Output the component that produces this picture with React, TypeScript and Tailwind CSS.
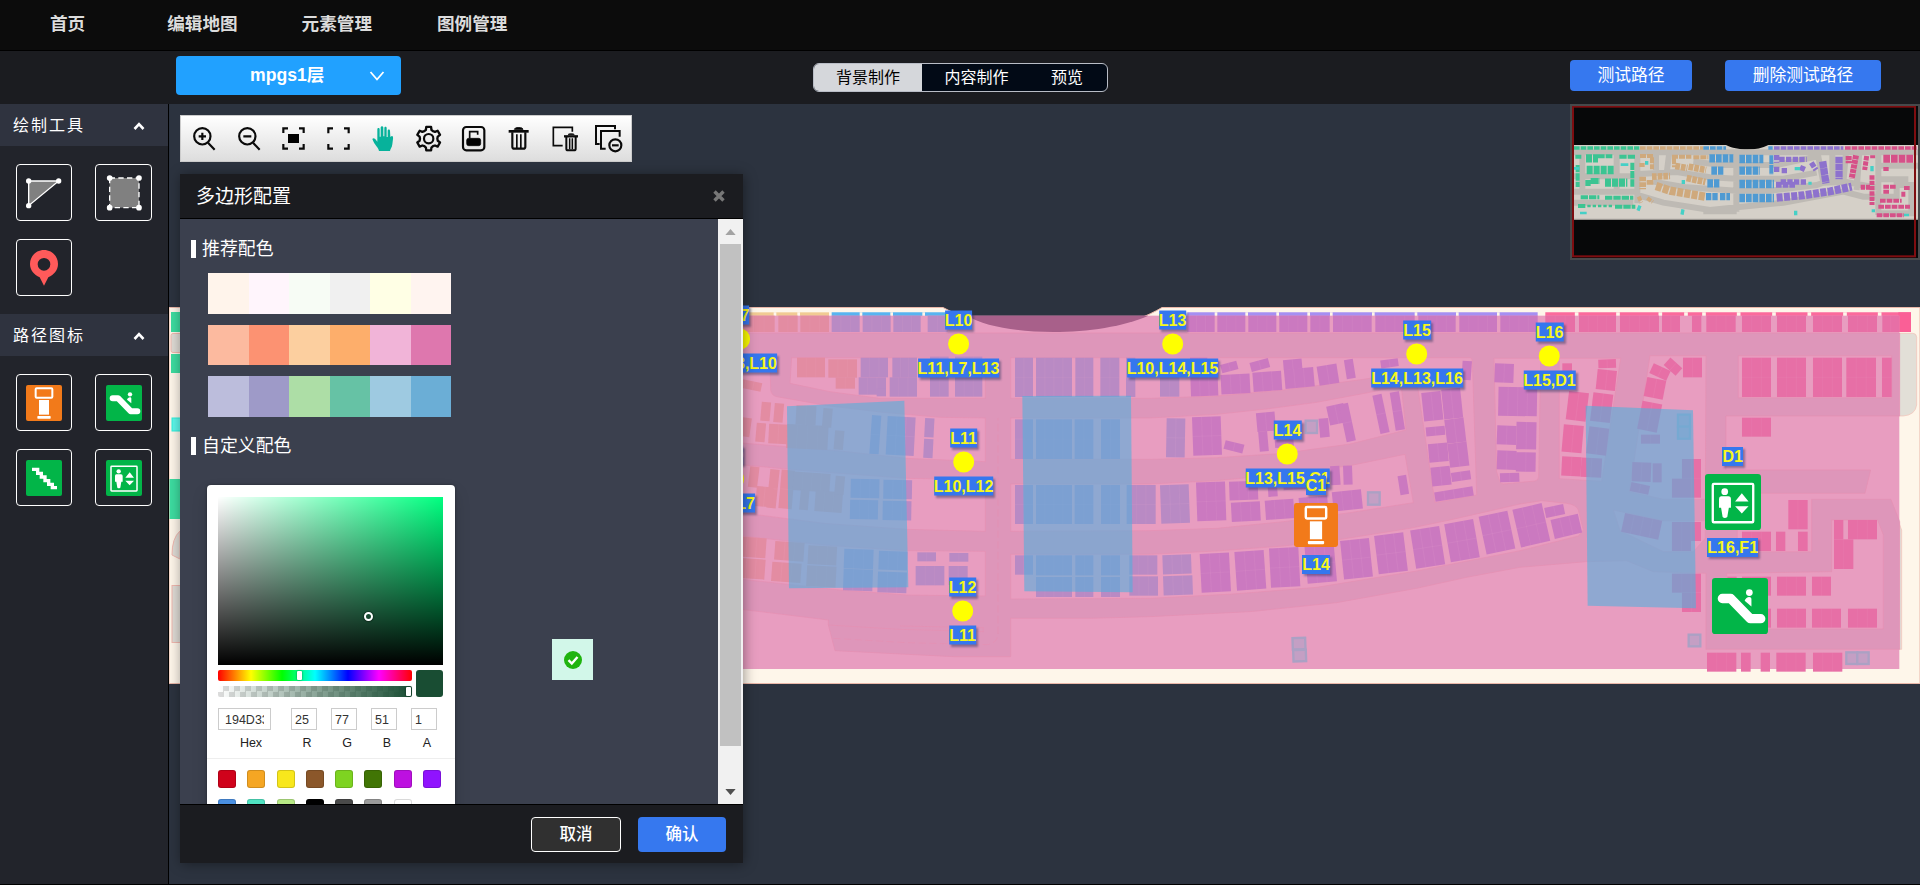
import React from "react";

/* ---------- shared pictograms ---------- */

function KioskIcon({ className }: { className?: string }) {
  return (
    <svg viewBox="0 0 108 108" className={className}>
      <rect width="108" height="108" rx="6" fill="#f27a1a" />
      <rect x="29" y="10" width="50" height="28" rx="3" fill="none" stroke="#fff" strokeWidth="6" />
      <rect x="39" y="45" width="30" height="44" fill="#fff" />
      <rect x="34" y="93" width="40" height="8" rx="2" fill="#fff" />
    </svg>
  );
}

function EscalatorIcon({ className }: { className?: string }) {
  return (
    <svg viewBox="0 0 108 108" className={className}>
      <rect width="108" height="108" rx="6" fill="#02b548" />
      <path d="M20 39.500H36L74 78.500H94" fill="none" stroke="#fff" strokeWidth="18" strokeLinecap="round" strokeLinejoin="round" />
      <circle cx="72" cy="28" r="6.500" fill="#fff" />
      <path d="M63 44C65 36 76 34 76 41V55Z" fill="#fff" />
    </svg>
  );
}

function StairsIcon({ className }: { className?: string }) {
  return (
    <svg viewBox="0 0 108 108" className={className}>
      <rect width="108" height="108" rx="6" fill="#02b548" />
      <path d="M18 28H35V40H46V51H57V62H68V73H79V83H93" fill="none" stroke="#fff" strokeWidth="10" />
    </svg>
  );
}

function ElevatorIcon({ className }: { className?: string }) {
  return (
    <svg viewBox="0 0 108 108" className={className}>
      <rect width="108" height="108" rx="6" fill="#02b548" />
      <rect x="15" y="19" width="78" height="74" rx="2" fill="none" stroke="#fff" strokeWidth="4.500" />
      <circle cx="38" cy="34" r="6.500" fill="#fff" />
      <path d="M31 43H45Q50 43 50 48V65H46L43 83Q38 87 34 83L31 65H27V48Q27 43 31 43Z" fill="#fff" />
      <path d="M71 37L84 53H58ZM58 62H84L71 76Z" fill="#fff" />
    </svg>
  );
}

function TriangleTool() {
  return (
    <svg viewBox="0 0 108 108" className="size-9">
      <path d="M8 18H98L8 92Z" fill="#808080" stroke="#fff" strokeWidth="4" />
      <g fill="#fff">
        <circle cx="8" cy="18" r="8" />
        <circle cx="98" cy="18" r="8" />
        <circle cx="8" cy="92" r="8" />
      </g>
    </svg>
  );
}

function RectTool() {
  return (
    <svg viewBox="0 0 108 108" className="size-9">
      <rect x="11" y="9" width="88" height="89" fill="#808080" />
      <rect x="11" y="9" width="88" height="89" fill="none" stroke="#fff" strokeWidth="4" strokeDasharray="16 10" />
      <g fill="#fff">
        <circle cx="11" cy="9" r="8.500" />
        <circle cx="99" cy="9" r="8.500" />
        <circle cx="11" cy="98" r="8.500" />
        <circle cx="99" cy="98" r="8.500" />
      </g>
    </svg>
  );
}

function PinTool() {
  return (
    <svg viewBox="0 0 108 108" className="size-9">
      <path
        fillRule="evenodd"
        fill="#ff5a5a"
        d="M54 0C31 0 12 18 12 42C12 60 24 74 41 82L54 107L67 82C84 74 96 60 96 42C96 18 77 0 54 0ZM54 24A19 19 0 1 1 54 62A19 19 0 1 1 54 24Z"
      />
    </svg>
  );
}

/* ---------- toolbar ---------- */

const gearPoints = (() => {
  const pts: string[] = [];
  for (let i = 0; i < 6; i++) {
    const base = (i * Math.PI) / 3 - Math.PI / 2;
    const steps: [number, number][] = [
      [-0.3, 28],
      [-0.2, 36],
      [0.2, 36],
      [0.3, 28],
      [0.52, 26],
    ];
    for (const [a, r] of steps) {
      pts.push(`${(41 + r * Math.cos(base + a)).toFixed(1)},${(41 + r * Math.sin(base + a)).toFixed(1)}`);
    }
  }
  return pts.join(" ");
})();

const toolbarIcons: React.ReactNode[] = [
  <g>
    <circle cx="37" cy="34" r="24.500" />
    <path d="M54 53L74 74M26 34H48M37 23V45" />
  </g>,
  <g>
    <circle cx="37" cy="34" r="24.500" />
    <path d="M54 53L74 74M25 34H49" />
  </g>,
  <g>
    <path d="M10 24V10H24M57 10H71V24M71 57V71H57M24 71H10V57" />
    <rect x="24" y="27" width="33" height="27" fill="#000" stroke="none" />
  </g>,
  <path d="M10 25V10H24M57 10H71V25M71 57V71H57M24 71H10V57" />,
  <path
    stroke="none"
    fill="#07b29b"
    d="M7 42C10 37 15 40 18 45L22 50V13C22 8 29 8 29 13V35H32V8C32 2 40 2 40 8V34H43V9C43 4 50 4 50 9V36H53V17C53 12 60 12 60 17L61 36C69 28 70 38 69 42L67 58C66 68 61 72 60 78H27C26 68 13 60 7 42Z"
  />,
  <g>
    <polygon points={gearPoints} strokeLinejoin="round" strokeWidth="7" />
    <circle cx="41" cy="41" r="14" />
  </g>,
  <g>
    <rect x="9" y="6" width="64" height="70" rx="10" />
    <rect x="20" y="40" width="42" height="22" rx="6" fill="#000" stroke="#000" strokeWidth="2" />
    <path d="M29 40V20H53V29" strokeWidth="5" />
  </g>,
  <g>
    <path d="M11 19H71" strokeWidth="8" />
    <path d="M28 13Q30 8 36 8H46Q52 8 54 13Z" fill="#000" strokeWidth="3" />
    <path d="M22 22V65Q22 71 28 71H55Q61 71 61 65V22" strokeWidth="6.500" />
    <path d="M35.500 28V70M47.500 28V70" strokeWidth="5" />
  </g>,
  <g>
    <path d="M38 62H10V7H67V20" strokeWidth="5" />
    <path d="M42 34H84" strokeWidth="7" />
    <path d="M54 29Q56 26 60 26H67Q71 26 73 29Z" fill="#000" strokeWidth="2" />
    <path d="M49 36V71Q49 76 54 76H72Q77 76 77 71V36" strokeWidth="6" />
    <path d="M59 40V73M67 40V73" strokeWidth="4.500" />
  </g>,
  <g>
    <path d="M14 57H3V3H60V13" strokeWidth="6" />
    <path d="M32 71H18V18H74V35" strokeWidth="6" />
    <circle cx="61" cy="61" r="18" />
    <path d="M51 61H71" />
  </g>,
];

function Toolbar() {
  return (
    <div className="absolute left-[11px] top-[11px] flex h-[47px] w-[452px] items-center border border-[#ccc] bg-linear-to-b from-white to-[#dddddd]">
      {toolbarIcons.map((icon, i) => (
        <span key={i} className="flex w-[45px] justify-center">
          <svg viewBox="0 0 81 81" className="size-[27px] overflow-visible" fill="none" stroke="#0a0a0a" strokeWidth="6.500">
            {icon}
          </svg>
        </span>
      ))}
    </div>
  );
}

/* ---------- map ---------- */

type Block = [number, number, number, number, number?];

function Blocks({ items, fill }: { items: Block[]; fill: string }) {
  return (
    <>
      {items.map(([x, y, w, h, r = 0], i) => {
        const n = Math.max(1, Math.round(w / 29));
        const lines: React.ReactNode[] = [];
        for (let k = 1; k < n; k++) {
          lines.push(<path key={k} d={`M${x + (w * k) / n} ${y}v${h}`} />);
        }
        if (h > 90) lines.push(<path key="h" d={`M${x} ${y + h / 2}h${w}`} />);
        return (
          <g key={i} transform={r ? `rotate(${r} ${x + w / 2} ${y + h / 2})` : undefined}>
            <rect x={x} y={y} width={w} height={h} fill={fill} />
            <g stroke="#f4b4d2" strokeOpacity=".14" strokeWidth="2">
              {lines}
            </g>
          </g>
        );
      })}
    </>
  );
}

const PINK = "#e89dc0";
const RED = "#e76fa6";
const MAGENTA = "#cb79c0";
const VIOLET = "#b98ac4";
const SALMON = "#e38ca2";

const westIslands = [
  "M155 203H736V325H420L270 305L150 280Z",
  "M-20 203H90L92 300Q94 316 110 320L270 348L430 367L600 382L736 384V515L500 505L300 483L-20 457Z",
  "M-20 522L170 540L500 565L736 570V724L500 718L250 700L-20 665Z",
  "M-20 735L250 765L500 782L736 784V918L500 915L300 900L-20 865Z",
  "M812 203H2190Q2197 203 2197 215L2210 615L2085 638L2033 290L2010 245L1870 268L1760 283L1630 300L1430 318L1230 325H812Z",
  "M812 384H1230L1430 373L1580 357L1730 337L1890 307L1970 290L1985 300L1998 420L1830 462L1630 490L1430 503L1230 508H812Z",
  "M812 582H1230L1430 572L1660 550L1830 527L1995 493L2020 638L1830 668L1630 695L1430 715L1230 722L812 724Z",
  "M812 793H1230L1430 783L1630 768L1790 750L2010 715L2130 690L2240 665L2340 642L2405 632L2480 640Q2510 645 2515 660L2530 720L2515 738L2340 782L2030 843L1730 892L1480 912L1230 925L812 927Z",
  "M2262 205H2402L2396 560Q2394 572 2385 573L2290 582Q2280 582 2278 570L2270 545Z",
];

const eastIslands = [
  "M118 205H302L245 574L118 566Z",
  "M390 197H558L556 628H430L328 605Z",
  "M280 660L430 692H556V745L520 785H430L300 722Z",
  "M655 197H1115V323H655Z",
  "M935 690H1073L1090 735V1017H620V850L935 845Z",
];

function MapDrawing() {
  return (
    <svg viewBox="169 104 1751 780" className="absolute inset-0 h-full w-full" preserveAspectRatio="none">
      <path d="M169 307.500H943C1000 338 1105 342 1162 307.500H1920V683.500H169Z" fill="#fef6ea" stroke="#eab7a8" strokeWidth="1" />
      <g>
        <rect x="171" y="312" width="20" height="20" fill="#3ddca0" />
        <rect x="171" y="333.500" width="20" height="19" rx="2" fill="#dfdbd5" stroke="#f0b7ae" />
        <rect x="171" y="354" width="20" height="19" fill="#3ddca0" />
        <rect x="172" y="418" width="20" height="13" fill="#5df7ea" stroke="#2fefdc" />
        <rect x="169.500" y="479" width="20" height="40" fill="#3ddca0" />
        <path d="M180 531Q172 538 172 555L180 559Z" fill="#dfdbd5" stroke="#f0b7ae" />
        <rect x="172" y="585.500" width="20" height="57" fill="#dfdbd5" stroke="#f0b7ae" />
      </g>

      <g transform="translate(740 290) scale(.33333)">
        <path d="M3400 130H3518Q3530 130 3530 142V345Q3526 375 3490 378H3400Z" fill="#e2dfd7" stroke="#f3bfb5" strokeWidth="2" />
        <path d="M3470 680L3485 720V1078H3470Z" fill="#e2dfd7" stroke="#f3bfb5" strokeWidth="2" />
        <g>
          <rect x="9" y="67" width="258" height="12" fill="#f1cb93" />
          <path d="M275 67H620V79H275Z" fill="#58b4f0" />
          <path d="M1342 67H2393V79H1342Z" fill="#a68ff2" />
          <path d="M2416 67H3513V79H2416Z" fill="#fb6a9c" />
          <rect x="3475" y="67" width="38" height="59" fill="#fa5f96" />
          <path
            d="M105 67v12M176 67v12M363 67v12M455 67v12M551 67v12M1428 67v12M1520 67v12M1613 67v12M1706 67v12M1774 67v12M1900 67v12M2028 67v12M2152 67v12M2275 67v12"
            stroke="#fef6ea"
            strokeWidth="8"
          />
          <path
            d="M2510 67v12M2634 67v12M2761 67v12M2838 67v12M2892 67v12M2996 67v12M3102 67v12M3208 67v12M3315 67v12M3419 67v12"
            stroke="#fef6ea"
            strokeWidth="11"
          />
        </g>
        <rect x="-20" y="77" width="3498" height="1060" fill={PINK} />
        <path d="M680 77C790 142 1080 142 1225 77Z" fill="#a8608a" />
        <path
          d="M-20 129H3479V378H2958V540H3392L3375 610H2992V785H3215V628H3453L3479 695V1078H2898V850L2740 845L2660 812L2540 815L2340 832L2180 862L2030 895L1790 938L1530 965L1230 980L1050 985H812V1100H640L285 1082L265 1005V990L-20 955Z"
          fill="#de96ba"
          stroke="#e690b2"
          strokeWidth="2"
        />
        <g fill={PINK} stroke="#e690b2" strokeWidth="2">
          {westIslands.map((d) => (
            <path key={d} d={d} />
          ))}
          <path d="M265 1005L480 1018L730 1025V1013L480 1008" fill="none" />
          <path d="M280 1045L500 1058L740 1064Q774 1060 774 1030V384" fill="none" strokeDasharray="22 10" />
        </g>

        <Blocks
          fill={SALMON}
          items={[
            [9, 77, 95, 49], [115, 77, 58, 49], [181, 77, 86, 49],
            [171, 203, 84, 59], [265, 208, 86, 55], [287, 262, 58, 34],
            [-10, 272, 75, 26, 12], [63, 336, 28, 57, 5], [102, 340, 28, 57, 5], [-10, 382, 42, 57, 8], [48, 399, 28, 57, 5],
            [86, 403, 58, 58, 3], [140, 405, 124, 72, 3], [168, 347, 60, 58, 3], [248, 355, 28, 57, 5], [283, 422, 28, 57, 5],
            [27, 530, 28, 62, 7], [85, 538, 28, 116, 6], [48, 590, 50, 60, 5], [120, 540, 40, 116, 5], [160, 548, 110, 56, 4], [180, 600, 26, 60, 5], [225, 604, 82, 62, 4], [285, 558, 28, 56, 5],
            [-10, 742, 88, 60, 4], [-10, 806, 85, 60, 4], [104, 756, 88, 56, 4], [95, 818, 88, 58, 4], [204, 768, 86, 56, 3], [200, 828, 88, 62, 3],
          ]}
        />
        <Blocks
          fill={VIOLET}
          items={[
            [275, 77, 84, 49], [368, 77, 84, 49], [460, 77, 82, 49], [563, 77, 60, 49],
            [362, 203, 82, 59], [457, 203, 74, 60], [356, 262, 82, 52], [410, 296, 28, 23], [449, 262, 82, 58], [570, 200, 56, 120], [645, 200, 82, 120],
            [392, 376, 28, 116, 4], [440, 380, 84, 116, 3], [554, 385, 28, 57, 3], [551, 447, 28, 57, 3],
            [332, 567, 86, 57, 1], [430, 570, 86, 57, 1], [330, 630, 84, 58, 1], [428, 633, 86, 58, 1],
            [312, 778, 88, 58, 2], [416, 784, 86, 56, 2], [310, 838, 88, 64, 2], [413, 846, 87, 62, 2],
            [532, 787, 56, 27], [628, 789, 57, 26], [527, 828, 86, 58], [626, 828, 57, 57],
            [825, 203, 54, 118], [888, 203, 108, 118], [1006, 203, 54, 118], [1081, 203, 57, 118], [1158, 203, 28, 118],
            [825, 388, 54, 119], [888, 388, 108, 119], [1004, 388, 56, 119], [1083, 388, 57, 119],
            [825, 585, 54, 117], [888, 585, 108, 117], [1004, 585, 56, 117], [1083, 585, 57, 117], [1160, 585, 87, 117],
            [825, 796, 54, 58], [888, 796, 108, 60], [1006, 796, 54, 60], [1083, 796, 57, 60], [1168, 796, 84, 58],
            [888, 861, 108, 60], [1006, 861, 54, 60], [1083, 861, 57, 60], [1168, 859, 86, 58],
            [1260, 260, 58, 60], [1279, 385, 56, 117, 1], [1262, 584, 86, 116, -2], [1268, 794, 86, 58, -2], [1270, 857, 88, 58, -2],
          ]}
        />
        <Blocks
          fill={MAGENTA}
          items={[
            [1342, 77, 82, 49], [1432, 77, 84, 49], [1525, 77, 84, 49], [1618, 77, 84, 49], [1711, 77, 58, 49], [1779, 77, 116, 49],
            [1906, 77, 118, 49], [2035, 77, 112, 49], [2158, 77, 113, 49], [2281, 77, 112, 49],
            [1350, 203, 52, 50], [1352, 258, 82, 60, -2], [1443, 218, 50, 26, -15], [1443, 253, 87, 58, -3], [1531, 211, 57, 28, -15], [1539, 245, 86, 58, -4],
            [1630, 208, 56, 30, -5], [1634, 235, 88, 58, -5], [1734, 225, 60, 58, -9], [1816, 208, 27, 58, -9], [1922, 208, 53, 24, -8], [2166, 213, 28, 57, 4],
            [1358, 380, 86, 116, -2], [1453, 457, 58, 27, 14], [1550, 367, 56, 57, -5], [1557, 424, 27, 60, -5], [1605, 448, 56, 24, -4], [1738, 385, 29, 57, -5],
            [1764, 344, 52, 58, -12], [1808, 340, 28, 115, -12], [1909, 313, 28, 117, -12], [1958, 305, 28, 116, -9],
            [1370, 576, 87, 116, -2], [1468, 574, 86, 56, -2], [1474, 636, 87, 58, -3], [1584, 580, 28, 40, -4], [1576, 629, 86, 58, -4], [1678, 620, 86, 58, -5], [1778, 602, 88, 58, -6], [1630, 570, 90, 28, -4],
            [1772, 528, 28, 57, -4], [1810, 527, 27, 57, -2], [1977, 556, 26, 58, -9],
            [2048, 306, 58, 86, -6], [2108, 296, 57, 90, -6], [2058, 410, 57, 27, -5], [2117, 386, 58, 72, -7], [2066, 460, 58, 56, -5], [2126, 458, 58, 72, -7], [2074, 530, 58, 57, -6], [2134, 545, 58, 27, -8], [2084, 598, 116, 28, -9],
            [2264, 221, 57, 57, 2], [2275, 291, 116, 87, 1], [2271, 407, 58, 57, 2], [2329, 396, 60, 82, 1], [2271, 482, 58, 57, 2], [2328, 487, 59, 58, 1], [2280, 549, 58, 27, -2],
            [1382, 790, 88, 116, -3], [1487, 783, 88, 116, -4], [1590, 773, 88, 118, -3], [1698, 762, 88, 116, -5], [1806, 748, 87, 116, -6], [1909, 732, 88, 116, -7], [2019, 714, 88, 116, -9], [2122, 694, 88, 116, -10], [2227, 670, 88, 116, -12], [2329, 648, 90, 116, -13],
            [2415, 648, 58, 30, -12], [2437, 680, 84, 58, -13],
          ]}
        />
        <g fill="#c49fc4" stroke="#aba1c4" strokeWidth="7">
          <rect x="1697" y="392" width="34" height="37" />
          <rect x="1884" y="607" width="35" height="37" />
          <rect x="1658" y="1044" width="38" height="34" transform="rotate(-2 1677 1061)" />
          <rect x="1660" y="1080" width="38" height="34" transform="rotate(-2 1679 1097)" />
        </g>

        <g transform="translate(2340 0)">
          <g fill={PINK} stroke="#e690b2" strokeWidth="2">
            {eastIslands.map((d) => (
              <path key={d} d={d} />
            ))}
          </g>
          <Blocks
            fill={RED}
            items={[
              [76, 77, 89, 49], [177, 77, 111, 49], [300, 77, 117, 49], [426, 77, 54, 49], [516, 77, 28, 49], [559, 77, 88, 49], [666, 77, 87, 49], [771, 77, 87, 49], [879, 77, 87, 49], [984, 77, 87, 49], [1087, 77, 51, 49],
              [127, 220, 29, 56], [235, 208, 53, 26, -2], [230, 240, 58, 60, 6], [142, 306, 60, 86, 7], [215, 310, 60, 86, 7], [128, 405, 60, 82, 5], [203, 412, 60, 82, 7], [125, 500, 58, 58, 3], [183, 504, 62, 58, 3],
              [392, 230, 56, 32, 25], [376, 266, 58, 58, 11], [359, 337, 60, 86, 11], [435, 215, 48, 30, 42], [489, 203, 57, 59], [363, 434, 57, 27],
              [336, 517, 57, 58, 2], [398, 520, 27, 57], [331, 582, 57, 27, 12], [308, 680, 114, 58, 12],
              [486, 507, 57, 116], [456, 566, 30, 57], [456, 696, 87, 57], [456, 753, 57, 30], [456, 851, 87, 57], [486, 908, 57, 58],
              [666, 203, 87, 118], [771, 203, 87, 118], [879, 203, 87, 118], [979, 203, 89, 118], [1086, 203, 29, 118],
              [666, 383, 87, 57], [805, 630, 58, 88], [666, 725, 87, 58], [768, 725, 28, 58], [834, 725, 29, 58],
              [942, 690, 28, 58], [984, 690, 87, 58], [942, 748, 58, 89],
              [622, 860, 28, 57], [666, 860, 87, 57], [771, 860, 87, 57], [876, 860, 57, 57],
              [666, 956, 87, 57], [771, 956, 87, 57], [876, 956, 87, 57], [984, 956, 87, 57],
              [561, 1088, 88, 57], [663, 1088, 29, 57], [722, 1088, 28, 57], [769, 1088, 88, 57], [879, 1088, 88, 57],
            ]}
          />
          <g fill="#c49fc4" stroke="#aba1c4" strokeWidth="7">
            <rect x="474" y="374" width="36" height="36" />
            <rect x="474" y="410" width="36" height="36" />
            <rect x="506" y="1034" width="35" height="35" />
            <rect x="979" y="1087" width="33" height="35" />
            <rect x="1012" y="1087" width="34" height="35" />
          </g>
          <path d="M197 347L519 361L528 955L203 947Z" fill="#53afdc" fillOpacity=".6" />
        </g>
        <path d="M141 349L493 332L505 892L147 895Z" fill="#53afdc" fillOpacity=".6" />
        <path d="M847 318L1173 317L1178 907L853 904Z" fill="#53afdc" fillOpacity=".6" />
      </g>
    </svg>
  );
}

interface MapNode {
  x: number;
  y: number;
  name: string;
  links: string;
}

const nodes: MapNode[] = [
  { x: 740, y: 338.5, name: "L7", links: "L6,L8,L10" },
  { x: 734, y: 479, name: "L9", links: "L8,L7" },
  { x: 958.5, y: 343.5, name: "L10", links: "L11,L7,L13" },
  { x: 963.5, y: 461.5, name: "L11", links: "L10,L12" },
  { x: 962.5, y: 610.5, name: "L12", links: "L11" },
  { x: 1172.5, y: 343.5, name: "L13", links: "L10,L14,L15" },
  { x: 1287.5, y: 453.5, name: "L14", links: "L13,L15,C1" },
  { x: 1417, y: 353.5, name: "L15", links: "L14,L13,L16" },
  { x: 1549.5, y: 355.5, name: "L16", links: "L15,D1" },
];

function Tag({ children }: { children: React.ReactNode }) {
  return (
    <span className="block h-[19px] bg-[#3577ee] font-['Liberation_Sans',sans-serif] text-[16px] leading-[19px] font-bold whitespace-nowrap text-[#f7f71a] shadow-[2px_2px_2px_rgba(40,50,90,0.45)]">
      {children}
    </span>
  );
}

function Marker({ x, y, children }: { x: number; y: number; children: React.ReactNode }) {
  return (
    <div
      className="absolute flex -translate-x-1/2 -translate-y-1/2 flex-col items-center"
      style={{ left: x - 169, top: y - 104 }}
    >
      {children}
    </div>
  );
}

function MapMarkers() {
  return (
    <>
      {nodes.map((n) => (
        <Marker key={n.name} x={n.x} y={n.y}>
          <Tag>{n.name}</Tag>
          <span className="my-1 size-[21px] rounded-full bg-[#ffff00]" />
          <Tag>{n.links}</Tag>
        </Marker>
      ))}
      <Marker x={1316} y={524.7}>
        <Tag>C1</Tag>
        <KioskIcon className="my-2 size-11" />
        <Tag>L14</Tag>
      </Marker>
      <Marker x={1732.7} y={502}>
        <Tag>D1</Tag>
        <ElevatorIcon className="my-2 size-14" />
        <Tag>L16,F1</Tag>
      </Marker>
      <Marker x={1739.5} y={605.7}>
        <EscalatorIcon className="size-14" />
      </Marker>
    </>
  );
}

/* ---------- minimap ---------- */

function MiniMap() {
  const bar = (d: string, color: string, width: number, dash: string) => (
    <path d={d} fill="none" stroke={color} strokeWidth={width} strokeDasharray={dash} />
  );
  const G = "#3cc492";
  const T = "#cfa97c";
  const B = "#4f9ad2";
  const P = "#8d72cd";
  const R = "#d65088";
  const C = "#45d0c6";
  return (
    <div className="absolute top-0 right-0 h-[156px] w-[350px] border-2 border-r-0 border-[#47494b] bg-[#070809]">
      <svg viewBox="66 168 1044 456" className="h-full w-full" preserveAspectRatio="none">
        <path d="M72 285H528C560 302 620 304 655 285H1104V510H72Z" fill="#d5d0c8" />
        <path d="M72 508H1104" stroke="#8e8b86" strokeWidth="3" />
        <g fill="none" stroke="#bebab4" strokeWidth="18">
          <path d="M72 307H1104M97 306V430M200 306V430M72 379H265M72 425H265M72 458H250M262 306V460M318 306V360M358 306L350 370M265 372L380 366L480 382L560 386H700L800 368M262 435L340 458L480 480L560 472L700 458L880 425L940 440H990M310 395L410 412L560 422H660L800 405L820 398M430 335L520 345H680L800 320M559 306V485M460 484H560M804 315L820 398M847 306V395M888 306L880 400M928 306L920 420M985 306V495M985 347H1104M985 388H1075M990 440H1040V405H1084V490H990M820 398L890 396L985 414" />
        </g>
        {bar("M72 294H268", G, 11, "17 3")}
        {bar("M270 294H460", T, 11, "17 3")}
        {bar("M460 294H528M655 294H668", B, 11, "17 3")}
        {bar("M672 294H880", P, 11, "17 3")}
        {bar("M885 294H1100", R, 11, "17 3")}
        {bar("M108 325H144M110 360H192M165 398H232", G, 25, "18 3")}
        {bar("M144 319H190", G, 12, "20 3")}
        {bar("M106 399H122M122 393H150", G, 18, "24 3")}
        {bar("M76 320H94M83 345V411M247 338V410", G, 12, "22 3")}
        {bar("M208 320H256M92 442H148M165 443H250M84 468H106M195 470H256", G, 12, "22 3")}
        {bar("M112 468H188", G, 8, "10 6")}
        {bar("M270 318H310M306 322V358M268 345H284M366 320H424M430 322H475M372 325V352", T, 12, "18 3")}
        {bar("M376 348L412 354M416 350L468 360M278 380V418M306 380L360 378M300 404V390M410 384L466 396", T, 20, "14 3")}
        {bar("M318 408L360 422L465 440", T, 25, "18 4")}
        {bar("M266 440L274 458M292 444L308 456", T, 12, "14 4")}
        {bar("M478 325H550M568 327H640M484 362H520M472 400H508M568 362H630M568 402H672M568 444H672", B, 25, "17 3")}
        {bar("M468 440H505M510 440H540", B, 22, "16 3")}
        {bar("M664 316V375", B, 12, "26 3")}
        {bar("M680 315V338M688 328H770M680 350V370M695 362H712M750 352L768 360M784 338L798 360M692 396H770", P, 16, "16 4")}
        {bar("M678 404H735", P, 18, "17 3")}
        {bar("M680 443L760 436L840 424L905 410", P, 24, "18 4")}
        {bar("M818 334L828 400M867 320V388", P, 22, "20 1")}
        {bar("M896 318V340M918 316L905 386", R, 18, "12 2")}
        {bar("M950 318L944 360M968 325V316M966 376V465M932 412H960", R, 15, "13 3")}
        {bar("M1000 326H1090", R, 24, "20 3")}
        {bar("M1000 357H1016M1000 410H1038M1000 425H1020M990 452H1055M985 470H1080M980 496H1062M1062 414H1080M1060 425V440", R, 12, "17 3")}
        {bar("M290 333V344M270 467L264 482M399 478L396 494M737 482V496M966 348V364M734 356H750M970 478V487M400 390V402M780 395V404", C, 10, "none")}
        {bar("M90 489H110M72 355H88M212 344H235M1062 495H1077", C, 8, "none")}
        <rect x="69" y="170" width="1026" height="449" fill="none" stroke="#7e0d10" strokeWidth="6" />
        <path d="M1107 168V624" stroke="#47494b" strokeWidth="6" />
      </svg>
    </div>
  );
}

/* ---------- polygon dialog ---------- */

function SectionTitle({ children }: { children: string }) {
  return (
    <div className="flex h-[18px] items-center gap-[6px]">
      <span className="h-full w-[5px] bg-white" />
      <span className="relative top-px text-[17.900px] leading-none text-white">{children}</span>
    </div>
  );
}

const palette = [
  ["bg-[#fff4eb]", "bg-[#fff5fc]", "bg-[#f7fcf5]", "bg-[#f0f0f0]", "bg-[#ffffe5]", "bg-[#fff4f0]"],
  ["bg-[#fcba9f]", "bg-[#fc9272]", "bg-[#fccf9f]", "bg-[#fdae6b]", "bg-[#f1b4d8]", "bg-[#de77ae]"],
  ["bg-[#bcbddc]", "bg-[#9e9ac8]", "bg-[#addea6]", "bg-[#66c2a5]", "bg-[#9ecae1]", "bg-[#6baed6]"],
];

const presets = [
  "bg-[#d0021b]", "bg-[#f5a623]", "bg-[#f8e71c]", "bg-[#8b572a]", "bg-[#7ed321]", "bg-[#417505]", "bg-[#bd10e0]", "bg-[#9013fe]",
  "bg-[#4a90e2]", "bg-[#50e3c2]", "bg-[#b8e986]", "bg-[#000000]", "bg-[#4a4a4a]", "bg-[#9b9b9b]", "bg-[#ffffff]",
];

function Field({ label, value, wide }: { label: string; value: string; wide?: boolean }) {
  return (
    <div className={wide ? "w-[53px]" : "w-[26px]"}>
      <div
        className={
          "flex h-[22px] items-center overflow-hidden border border-[#ccc] text-[12.500px] whitespace-nowrap text-[#333] " +
          (wide ? "px-[6px]" : "pl-[3px]")
        }
      >
        <span className="relative top-px overflow-hidden">{value}</span>
      </div>
      <div className={"mt-[5px] text-center text-[12.500px] leading-4 text-[#222] " + (wide ? "pl-[13px]" : "pl-[6px]")}>{label}</div>
    </div>
  );
}

function ColorPicker() {
  return (
    <div className="w-[248px] rounded bg-white px-[11px] pt-3 font-['Liberation_Sans',sans-serif] shadow-[0_0_3px_rgba(0,0,0,0.35),0_8px_16px_rgba(0,0,0,0.15)]">
      <div className="relative h-[168px] w-[225px] bg-[#00ff80]">
        <div className="absolute inset-0 bg-linear-to-r from-white to-transparent" />
        <div className="absolute inset-0 bg-linear-to-t from-black to-transparent" />
        <div className="absolute top-[115px] left-[146px] size-[9px] rounded-full border-2 border-white shadow-[0_0_1px_1px_rgba(0,0,0,0.3)]" />
      </div>
      <div className="mt-[5px] flex w-[225px] justify-between">
        <div className="flex flex-col gap-[5px]">
          <div className="relative h-[11px] w-[194px] rounded-[2px] bg-[linear-gradient(to_right,#f00_0%,#ff0_17%,#0f0_33%,#0ff_50%,#00f_67%,#f0f_83%,#f00_100%)]">
            <span className="absolute top-px left-[79px] h-[9px] w-[5px] rounded-[1px] bg-white shadow-[0_0_2px_rgba(0,0,0,0.6)]" />
          </div>
          <div className="relative h-[11px] w-[194px] rounded-[2px] bg-[linear-gradient(to_right,rgba(25,77,51,0),#194d33),repeating-conic-gradient(#dcdcdc_0_25%,#fff_0_50%)] bg-size-[auto,11px_11px]">
            <span className="absolute top-px right-px h-[9px] w-[5px] rounded-[1px] bg-white shadow-[0_0_2px_rgba(0,0,0,0.6)]" />
          </div>
        </div>
        <div className="h-[27px] w-[27px] rounded-[3px] bg-[#194d33]" />
      </div>
      <div className="mt-[11px] flex">
        <Field wide label="Hex" value="194D33" />
        <div className="ml-5 flex gap-[14px]">
          <Field label="R" value="25" />
          <Field label="G" value="77" />
          <Field label="B" value="51" />
          <Field label="A" value="1" />
        </div>
      </div>
      <div className="-mx-[11px] mt-[7px] grid grid-cols-[repeat(8,18px)] gap-x-[11.300px] gap-y-[11px] border-t border-[#eee] px-[11px] pt-[11px] pb-3">
        {presets.map((c) => (
          <span key={c} className={"size-[18px] rounded-[3px] shadow-[inset_0_0_0_1px_rgba(0,0,0,0.15)] " + c} />
        ))}
      </div>
    </div>
  );
}

function PolygonDialog() {
  return (
    <div className="absolute top-[70px] left-[11px] flex h-[689px] w-[563px] flex-col shadow-[1px_1px_12px_rgba(0,0,0,0.4)]">
      <header className="flex h-[45px] shrink-0 items-center justify-between border-b border-black bg-[#1b1c20] pr-[18px] pl-4">
        <h2 className="text-[19px] leading-none text-white">多边形配置</h2>
        <svg viewBox="0 0 12 12" className="size-3">
          <path d="M1.500 1.500L10.500 10.500M10.500 1.500L1.500 10.500" stroke="#777" strokeWidth="3.400" />
        </svg>
      </header>
      <div className="flex min-h-0 flex-1">
        <div className="flex-1 overflow-hidden bg-[#3b404e] pt-[21px] pl-[11px]">
          <SectionTitle>推荐配色</SectionTitle>
          <div className="mt-[15px] ml-[17px] flex w-[243px] flex-col gap-[11px]">
            {palette.map((row, i) => (
              <div key={i} className="grid h-[40.700px] grid-cols-6">
                {row.map((c) => (
                  <span key={c} className={c} />
                ))}
              </div>
            ))}
          </div>
          <div className="mt-5">
            <SectionTitle>自定义配色</SectionTitle>
          </div>
          <div className="mt-[30px] ml-4 flex">
            <ColorPicker />
            <div className="mt-[154px] ml-[97px] flex size-[41px] items-center justify-center bg-[#d2f7e9]">
              <svg viewBox="0 0 18 18" className="size-[18px]">
                <circle cx="9" cy="9" r="9" fill="#20b40f" />
                <path d="M4.500 9.200L7.800 12.500L13.500 6" fill="none" stroke="#fff" strokeWidth="2.400" />
              </svg>
            </div>
          </div>
        </div>
        <div className="flex w-[25px] flex-col items-center justify-between bg-[#f1f1f1]">
          <span className="flex h-[25px] items-center justify-center">
            <svg viewBox="0 0 12 7" className="h-[6px] w-[11px]">
              <path d="M0 7L6 0L12 7Z" fill="#a3a3a3" />
            </svg>
          </span>
          <span className="h-[502px] w-[21px] bg-[#c1c1c1]" />
          <span className="mt-auto flex h-[25px] items-center justify-center">
            <svg viewBox="0 0 12 7" className="h-[6px] w-[11px]">
              <path d="M0 0H12L6 7Z" fill="#505050" />
            </svg>
          </span>
        </div>
      </div>
      <footer className="flex h-[59px] shrink-0 justify-end gap-[17px] border-t border-black bg-[#1b1c20] pt-3 pr-[17px]">
        <button className="h-[35px] w-[90px] rounded border border-white bg-[#303030] text-[16.500px] leading-none font-medium text-white">取消</button>
        <button className="h-[35px] w-[88px] rounded bg-[#3678ef] text-[16.500px] leading-none font-medium text-white">确认</button>
      </footer>
    </div>
  );
}

/* ---------- sidebar ---------- */

function SideSection({ title, items, className }: { title: string; items: React.ReactNode[]; className: string }) {
  return (
    <section className={className}>
      <h3 className="flex h-[42px] items-center justify-between bg-[#2f333f] pt-px pr-[23px] pl-[13px] text-[16px] leading-none font-normal tracking-[2px] text-white">
        {title}
        <svg viewBox="0 0 12 8" className="h-2 w-3">
          <path d="M1.500 7L6 2.200L10.500 7" fill="none" stroke="#fff" strokeWidth="2.600" />
        </svg>
      </h3>
      <div className="grid grid-cols-[56px_57px] gap-x-[23px] gap-y-[18px] pt-[18px] pl-4">
        {items.map((item, i) => (
          <span key={i} className="flex h-[57px] items-center justify-center rounded-[4px] border border-white">
            {item}
          </span>
        ))}
      </div>
    </section>
  );
}

/* ---------- page ---------- */

export default function App() {
  return (
    <div className="flex h-[885px] w-[1920px] flex-col overflow-hidden bg-[#1b1c20] font-['Liberation_Sans','Noto_Sans_CJK_SC',sans-serif]">
      <nav className="flex h-[51px] shrink-0 items-center border-b border-black bg-[#0c0c0c] pb-px pl-[50px] text-[17.600px] font-bold text-[#dcdcdc]">
        <a>首页</a>
        <a className="ml-[82px]">编辑地图</a>
        <a className="ml-16">元素管理</a>
        <a className="ml-[65px]">图例管理</a>
      </nav>

      <div className="flex h-[53px] shrink-0 items-start pl-44">
        <div className="mt-[5px] flex h-[39px] w-[225px] items-center rounded-[4px] bg-[#21a1ff] pr-[16px] pl-[74px] text-[17.600px] font-bold text-white">
          <span className="flex-1">mpgs1层</span>
          <svg viewBox="0 0 16 10" className="h-[10px] w-4">
            <path d="M1.500 1L8 8.500L14.500 1" fill="none" stroke="#fff" strokeWidth="1.800" />
          </svg>
        </div>
        <div className="mt-3 ml-[412px] flex h-[29px] w-[295px] overflow-hidden rounded-[6px] border border-[#b9bdc6] bg-[#020a16] text-[16px] leading-[28px] text-white">
          <span className="w-[108px] bg-[#d5d7db] text-center text-black">背景制作</span>
          <span className="w-[109px] text-center">内容制作</span>
          <span className="flex-1 pr-1 text-center">预览</span>
        </div>
        <button className="mt-[9px] ml-[462px] h-[31px] w-[122px] rounded bg-[#3678ef] pt-[2px] text-[16.800px] leading-none text-white">测试路径</button>
        <button className="mt-[9px] ml-[33px] h-[31px] w-[156px] rounded bg-[#3678ef] pt-[2px] text-[16.800px] leading-none text-white">删除测试路径</button>
      </div>

      <div className="flex min-h-0 flex-1 border-b border-black">
        <aside className="w-[169px] shrink-0 border-r border-black bg-[#22242b]">
          <SideSection
            className="h-[209px]"
            title="绘制工具"
            items={[<TriangleTool key="t" />, <RectTool key="r" />, <PinTool key="p" />]}
          />
          <SideSection
            className="pt-px"
            title="路径图标"
            items={[
              <KioskIcon key="k" className="size-9" />,
              <EscalatorIcon key="e" className="size-9" />,
              <StairsIcon key="s" className="size-9" />,
              <ElevatorIcon key="l" className="size-9" />,
            ]}
          />
        </aside>
        <main className="relative flex-1 overflow-hidden bg-[#2c333f]">
          <MapDrawing />
          <MapMarkers />
          <MiniMap />
          <Toolbar />
          <PolygonDialog />
        </main>
      </div>
    </div>
  );
}
